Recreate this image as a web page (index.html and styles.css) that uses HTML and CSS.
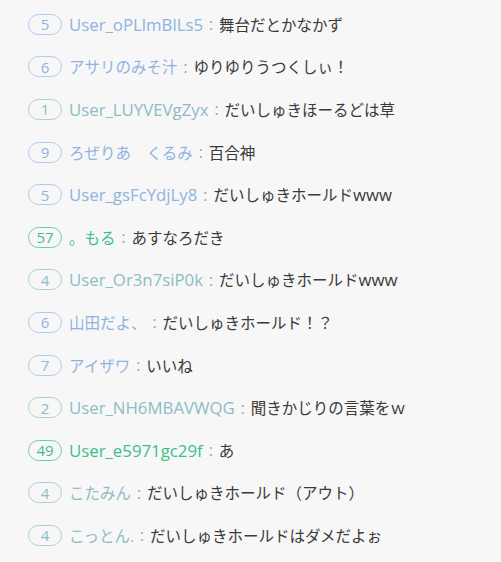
FILE: index.html
```html
<!DOCTYPE html>
<html lang="ja">
<head>
    <meta charset="UTF-8">
    <meta name="viewport" content="width=device-width, initial-scale=1.0">
    <title>Comments</title>
    <link rel="stylesheet" href="styles.css">
</head>
<body>
    <ul class="comments">
        <li class="comment blue"><span class="count">5</span><span class="name en">User_oPLlmBlLs5</span><span class="sep">:</span><span class="text">舞台だとかなかず</span></li>
        <li class="comment blue"><span class="count">6</span><span class="name">アサリのみそ汁</span><span class="sep">:</span><span class="text">ゆりゆりうつくしぃ！</span></li>
        <li class="comment teal"><span class="count">1</span><span class="name en">User_LUYVEVgZyx</span><span class="sep">:</span><span class="text">だいしゅきほーるどは草</span></li>
        <li class="comment blue"><span class="count">9</span><span class="name">ろぜりあ　くるみ</span><span class="sep">:</span><span class="text">百合神</span></li>
        <li class="comment blue"><span class="count">5</span><span class="name en">User_gsFcYdjLy8</span><span class="sep">:</span><span class="text">だいしゅきホールド<span class="en">www</span></span></li>
        <li class="comment green"><span class="count">57</span><span class="name">。もる</span><span class="sep">:</span><span class="text">あすなろだき</span></li>
        <li class="comment teal"><span class="count">4</span><span class="name en">User_Or3n7siP0k</span><span class="sep">:</span><span class="text">だいしゅきホールド<span class="en">www</span></span></li>
        <li class="comment blue"><span class="count">6</span><span class="name">山田だよ、</span><span class="sep">:</span><span class="text">だいしゅきホールド！？</span></li>
        <li class="comment blue"><span class="count">7</span><span class="name">アイザワ</span><span class="sep">:</span><span class="text">いいね</span></li>
        <li class="comment teal"><span class="count">2</span><span class="name en">User_NH6MBAVWQG</span><span class="sep">:</span><span class="text">聞きかじりの言葉をｗ</span></li>
        <li class="comment green"><span class="count">49</span><span class="name en">User_e5971gc29f</span><span class="sep">:</span><span class="text">あ</span></li>
        <li class="comment teal"><span class="count">4</span><span class="name">こたみん</span><span class="sep">:</span><span class="text">だいしゅきホールド（アウト）</span></li>
        <li class="comment teal"><span class="count">4</span><span class="name">こっとん.</span><span class="sep">:</span><span class="text">だいしゅきホールドはダメだよぉ</span></li>
    </ul>
</body>
</html>
```
FILE: styles.css
```css
body {
    margin: 0;
    background: #f7f7f7;
    font-family: "Open Sans", "Noto Sans CJK JP", sans-serif;
    font-size: 15.5px;
    color: #3a3a3a;
}
.comments { list-style: none; margin: 0; padding: 3px 0 0 28px; }
.comment {
    display: flex;
    align-items: center;
    height: 42.6px;
    white-space: nowrap;
}
.count {
    box-sizing: border-box;
    width: 34px;
    height: 21px;
    border: 1px solid;
    border-radius: 11px;
    display: flex;
    align-items: center;
    justify-content: center;
    font-size: 15px;
    margin-right: 7px;
}
.en { font-size: 16.8px; }
.sep { color: #a0a0a0; margin: 0 6px; }
.blue .name, .blue .count { color: #8fb3e0; }
.blue .count { border-color: #b0cbec; }
.teal .name, .teal .count { color: #8dbcc4; }
.teal .count { border-color: #aed0d5; }
.green .name, .green .count { color: #3cbf8c; }
.green .count { border-color: #6acea6; }
```
